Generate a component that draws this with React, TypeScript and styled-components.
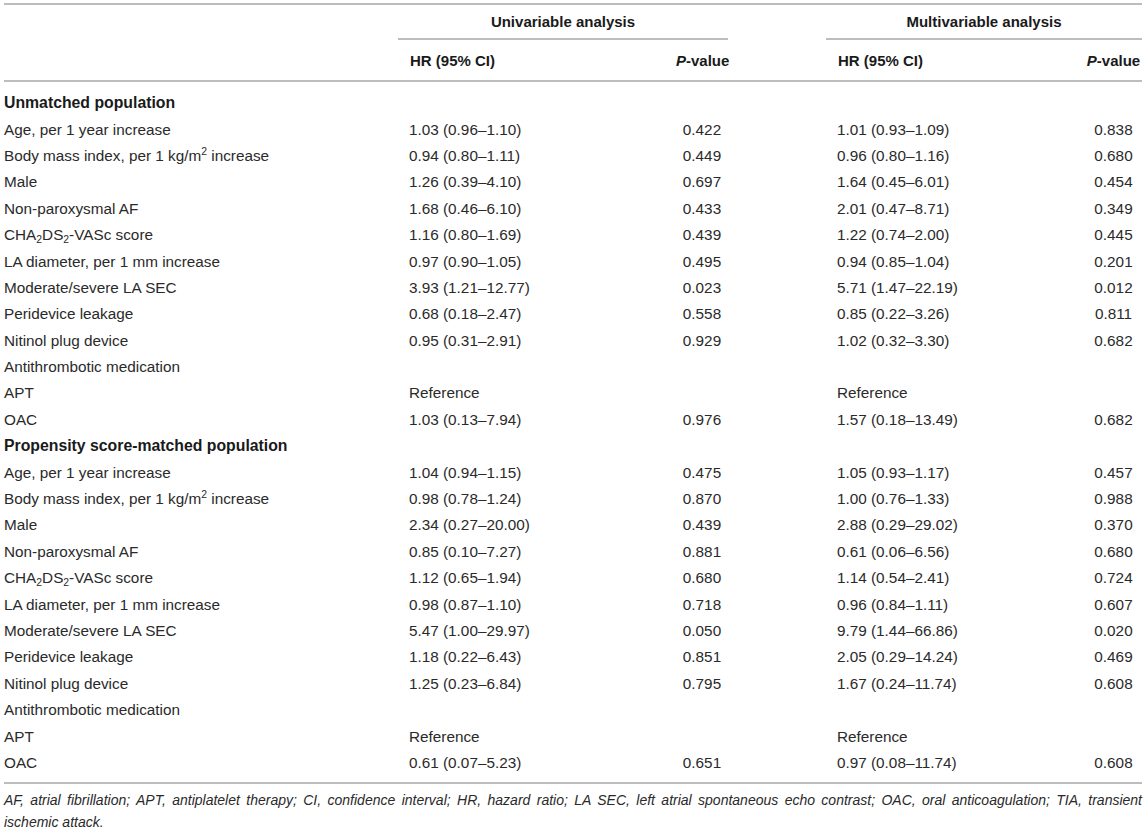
import React from "react";
import styled, { createGlobalStyle } from "styled-components";

const GlobalStyle = createGlobalStyle`
  html, body { margin: 0; padding: 0; background: #ffffff; }
  body { font-family: "Liberation Sans", Arial, Helvetica, sans-serif; color: #222; }
`;

const COLS = "394px 278px 52px 98px 259px 57px";

const Page = styled.div`
  width: 1138px;
  padding: 3px 4px 0 4px;
  font-size: 15.3px;
`;

const Table = styled.div`
  border-top: 2px solid #bdbdbd;
  border-bottom: 2px solid #bdbdbd;
`;

const Head = styled.div`
  border-bottom: 2px solid #bdbdbd;
  font-size: 15px;
`;

const GridRow = styled.div<{ $h: number }>`
  display: grid;
  grid-template-columns: ${COLS};
  height: ${(p) => p.$h}px;
  align-items: center;
`;

const GroupCell = styled.div<{ $col: string }>`
  grid-column: ${(p) => p.$col};
  align-self: stretch;
  display: flex;
  align-items: center;
  justify-content: center;
  font-weight: bold;
  color: #1a1a1a;
  border-bottom: 2px solid #bdbdbd;
`;

const HeadCell = styled.div<{ $center?: boolean }>`
  font-weight: bold;
  color: #1a1a1a;
  white-space: nowrap;
  padding-left: ${(p) => (p.$center ? 0 : 12)}px;
  text-align: ${(p) => (p.$center ? "center" : "left")};
`;

const Body = styled.div`
  padding: 8px 0 6px 0;
`;

const Row = styled.div`
  display: grid;
  grid-template-columns: ${COLS};
  height: 26.4px;
  align-items: center;
  white-space: nowrap;
`;

const Label = styled.div<{ $bold?: boolean }>`
  grid-column: ${(p) => (p.$bold ? "1 / -1" : "1")};
  font-weight: ${(p) => (p.$bold ? "bold" : "normal")};
  font-size: ${(p) => (p.$bold ? "15.8px" : "inherit")};
  color: ${(p) => (p.$bold ? "#1a1a1a" : "#2a2a2a")};
`;

const Value = styled.div<{ $col: number; $center?: boolean }>`
  grid-column: ${(p) => p.$col};
  color: #2a2a2a;
  padding-left: ${(p) => (p.$center ? 0 : 11)}px;
  text-align: ${(p) => (p.$center ? "center" : "left")};
`;

const Sub = styled.sub`
  font-size: 0.68em;
  line-height: 0;
  vertical-align: -0.3em;
`;

const Sup = styled.sup`
  font-size: 0.68em;
  line-height: 0;
  vertical-align: 0.55em;
`;

const Footnote = styled.p`
  margin: 0;
  padding-top: 5px;
  font-size: 14px;
  font-style: italic;
  line-height: 22px;
  text-align: justify;
  color: #2a2a2a;
`;

type DataRow = {
  label: React.ReactNode;
  hr1?: string;
  p1?: string;
  hr2?: string;
  p2?: string;
  section?: boolean;
};

const bmi = (
  <>
    Body mass index, per 1 kg/m<Sup>2</Sup> increase
  </>
);
const cha = (
  <>
    CHA<Sub>2</Sub>DS<Sub>2</Sub>-VASc score
  </>
);

const rows: DataRow[] = [
  { label: "Unmatched population", section: true },
  { label: "Age, per 1 year increase", hr1: "1.03 (0.96–1.10)", p1: "0.422", hr2: "1.01 (0.93–1.09)", p2: "0.838" },
  { label: bmi, hr1: "0.94 (0.80–1.11)", p1: "0.449", hr2: "0.96 (0.80–1.16)", p2: "0.680" },
  { label: "Male", hr1: "1.26 (0.39–4.10)", p1: "0.697", hr2: "1.64 (0.45–6.01)", p2: "0.454" },
  { label: "Non-paroxysmal AF", hr1: "1.68 (0.46–6.10)", p1: "0.433", hr2: "2.01 (0.47–8.71)", p2: "0.349" },
  { label: cha, hr1: "1.16 (0.80–1.69)", p1: "0.439", hr2: "1.22 (0.74–2.00)", p2: "0.445" },
  { label: "LA diameter, per 1 mm increase", hr1: "0.97 (0.90–1.05)", p1: "0.495", hr2: "0.94 (0.85–1.04)", p2: "0.201" },
  { label: "Moderate/severe LA SEC", hr1: "3.93 (1.21–12.77)", p1: "0.023", hr2: "5.71 (1.47–22.19)", p2: "0.012" },
  { label: "Peridevice leakage", hr1: "0.68 (0.18–2.47)", p1: "0.558", hr2: "0.85 (0.22–3.26)", p2: "0.811" },
  { label: "Nitinol plug device", hr1: "0.95 (0.31–2.91)", p1: "0.929", hr2: "1.02 (0.32–3.30)", p2: "0.682" },
  { label: "Antithrombotic medication" },
  { label: "APT", hr1: "Reference", hr2: "Reference" },
  { label: "OAC", hr1: "1.03 (0.13–7.94)", p1: "0.976", hr2: "1.57 (0.18–13.49)", p2: "0.682" },
  { label: "Propensity score-matched population", section: true },
  { label: "Age, per 1 year increase", hr1: "1.04 (0.94–1.15)", p1: "0.475", hr2: "1.05 (0.93–1.17)", p2: "0.457" },
  { label: bmi, hr1: "0.98 (0.78–1.24)", p1: "0.870", hr2: "1.00 (0.76–1.33)", p2: "0.988" },
  { label: "Male", hr1: "2.34 (0.27–20.00)", p1: "0.439", hr2: "2.88 (0.29–29.02)", p2: "0.370" },
  { label: "Non-paroxysmal AF", hr1: "0.85 (0.10–7.27)", p1: "0.881", hr2: "0.61 (0.06–6.56)", p2: "0.680" },
  { label: cha, hr1: "1.12 (0.65–1.94)", p1: "0.680", hr2: "1.14 (0.54–2.41)", p2: "0.724" },
  { label: "LA diameter, per 1 mm increase", hr1: "0.98 (0.87–1.10)", p1: "0.718", hr2: "0.96 (0.84–1.11)", p2: "0.607" },
  { label: "Moderate/severe LA SEC", hr1: "5.47 (1.00–29.97)", p1: "0.050", hr2: "9.79 (1.44–66.86)", p2: "0.020" },
  { label: "Peridevice leakage", hr1: "1.18 (0.22–6.43)", p1: "0.851", hr2: "2.05 (0.29–14.24)", p2: "0.469" },
  { label: "Nitinol plug device", hr1: "1.25 (0.23–6.84)", p1: "0.795", hr2: "1.67 (0.24–11.74)", p2: "0.608" },
  { label: "Antithrombotic medication" },
  { label: "APT", hr1: "Reference", hr2: "Reference" },
  { label: "OAC", hr1: "0.61 (0.07–5.23)", p1: "0.651", hr2: "0.97 (0.08–11.74)", p2: "0.608" },
];

export default function App() {
  return (
    <>
      <GlobalStyle />
      <Page>
        <Table>
          <Head>
            <GridRow $h={35}>
              <div />
              <GroupCell $col="2 / 4">Univariable analysis</GroupCell>
              <div />
              <GroupCell $col="5 / 7">Multivariable analysis</GroupCell>
            </GridRow>
            <GridRow $h={40}>
              <div />
              <HeadCell>HR (95% CI)</HeadCell>
              <HeadCell $center>
                <i>P</i>-value
              </HeadCell>
              <div />
              <HeadCell>HR (95% CI)</HeadCell>
              <HeadCell $center>
                <i>P</i>-value
              </HeadCell>
            </GridRow>
          </Head>
          <Body>
            {rows.map((r, i) => (
              <Row key={i}>
                <Label $bold={r.section}>{r.label}</Label>
                {!r.section && (
                  <>
                    <Value $col={2}>{r.hr1}</Value>
                    <Value $col={3} $center>
                      {r.p1}
                    </Value>
                    <Value $col={5}>{r.hr2}</Value>
                    <Value $col={6} $center>
                      {r.p2}
                    </Value>
                  </>
                )}
              </Row>
            ))}
          </Body>
        </Table>
        <Footnote>
          AF, atrial fibrillation; APT, antiplatelet therapy; CI, confidence interval; HR, hazard ratio; LA SEC, left
          atrial spontaneous echo contrast; OAC, oral anticoagulation; TIA, transient ischemic attack.
        </Footnote>
      </Page>
    </>
  );
}
